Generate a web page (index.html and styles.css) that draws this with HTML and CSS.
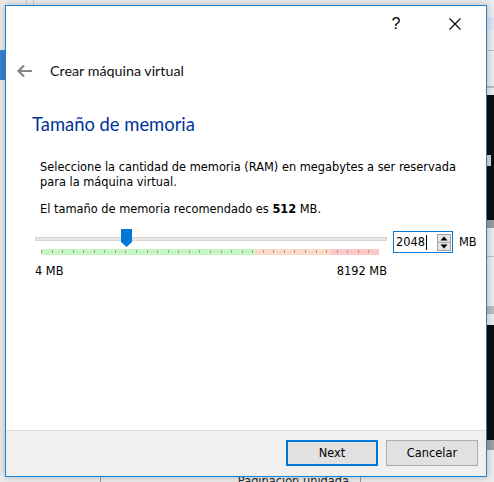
FILE: index.html
```html
<!DOCTYPE html>
<html lang="es">
<head>
    <meta charset="UTF-8">
    <meta name="viewport" content="width=device-width, initial-scale=1.0">
    <title>Crear máquina virtual</title>
    <link rel="stylesheet" href="styles.css">
</head>
<body>
    <div class="dialog">
        <div class="titlebar">
            <span class="cap-btn cap-help">?</span>
            <span class="cap-btn cap-close">
                <svg width="12" height="12" viewBox="0 0 12 12"><path d="M0.5 0.5L11.5 11.5M11.5 0.5L0.5 11.5" stroke="#000" stroke-width="1.1" fill="none"/></svg>
            </span>
        </div>

        <div class="wizard">
            <div class="wizard-header">
                <svg class="back" width="16" height="14" viewBox="0 0 16 14"><path d="M16 7H2.5M8 1.5L2.5 7L8 12.5" fill="none" stroke="#858585" stroke-width="2.2"/></svg>
                <span class="wizard-title">Crear máquina virtual</span>
            </div>

            <h1 class="page-title">Tamaño de memoria</h1>

            <p class="text first">Seleccione la cantidad de memoria (RAM) en megabytes a ser reservada para la máquina virtual.</p>
            <p class="text">El tamaño de memoria recomendado es <b>512</b> MB.</p>

            <div class="memory-row">
                <div class="slider">
                    <div class="groove">
                        <div class="track"></div>
                        <svg class="handle" width="11" height="18" viewBox="0 0 11 18"><path d="M0 0H11V13L5.5 18L0 13Z" fill="#0078d7"/></svg>
                    </div>
                    <div class="ticks"></div>
                    <div class="scale">
                        <span>4 MB</span>
                        <span>8192 MB</span>
                    </div>
                </div>

                <div class="spinbox">
                    <span class="value">2048</span>
                    <span class="caret"></span>
                    <svg class="spin" width="14" height="17" viewBox="0 0 14 17">
                        <rect x="0.5" y="0.5" width="13" height="8" fill="#e5e5e5" stroke="#a3a3a3"/>
                        <rect x="0.5" y="8.5" width="13" height="8" fill="#e5e5e5" stroke="#a3a3a3"/>
                        <path d="M3.5 6.5L7 2.5L10.5 6.5Z" fill="#000"/>
                        <path d="M3.5 10.5L7 14.5L10.5 10.5Z" fill="#000"/>
                    </svg>
                </div>
                <span class="unit">MB</span>
            </div>
        </div>

        <div class="footer">
            <button class="btn default">Next</button>
            <button class="btn">Cancelar</button>
        </div>
    </div>

    <div class="behind">Paginación unidada</div>
</body>
</html>
```

FILE: styles.css
```css
body {
    margin: 0;
    width: 494px;
    height: 482px;
    overflow: hidden;
    font-family: "DejaVu Sans", sans-serif;
    font-size: 11.4px;
    color: #000;
    background:
        linear-gradient(#3b84d6, #3b84d6) 0 50px / 5px 30px no-repeat,
        linear-gradient(#c9c9c9, #c9c9c9) 26px 0 / 1px 5px no-repeat,
        linear-gradient(#c9c9c9, #c9c9c9) 33px 0 / 1px 5px no-repeat,
        linear-gradient(#dde7f1, #dde7f1) 487px 17px / 7px 13px no-repeat,
        linear-gradient(#bdbdbd, #bdbdbd) 487px 50px / 7px 1px no-repeat,
        linear-gradient(#bdbdbd, #bdbdbd) 487px 86px / 7px 2px no-repeat,
        linear-gradient(#d9d9d9, #d9d9d9) 487px 155px / 4px 11px no-repeat,
        linear-gradient(#0d0d0d, #0d0d0d) 487px 95px / 7px 125px no-repeat,
        linear-gradient(#9c9c9c, #9c9c9c) 487px 220px / 7px 8px no-repeat,
        linear-gradient(#bdbdbd, #bdbdbd) 487px 256px / 7px 1px no-repeat,
        linear-gradient(#bdbdbd, #bdbdbd) 487px 306px / 7px 8px no-repeat,
        linear-gradient(#0d0d0d, #0d0d0d) 487px 325px / 7px 115px no-repeat,
        linear-gradient(#a0a0a0, #a0a0a0) 487px 440px / 7px 10px no-repeat,
        #ededed;
}

.dialog {
    margin: 5px 0 0 5px;
    width: 482px;
    height: 472px;
    box-sizing: border-box;
    border: 1px solid #1883d7;
    background-color: #fff;
    display: flex;
    flex-direction: column;
    box-shadow: 0 0 8px rgba(0, 0, 0, 0.25);
    position: relative;
}

.titlebar {
    height: 36px;
    display: flex;
    justify-content: flex-end;
    align-items: center;
    gap: 13px;
    padding-right: 8px;
}
.cap-btn {
    width: 46px;
    height: 30px;
    display: flex;
    justify-content: center;
    align-items: center;
}
.cap-help {
    font-family: "Liberation Sans", sans-serif;
    font-size: 16px;
}

.wizard {
    flex: 1;
}
.wizard-header {
    margin-top: 19px;
    height: 20px;
    padding-left: 10px;
    display: flex;
    align-items: center;
    gap: 18px;
}
.wizard-title {
    font-family: Lato, sans-serif;
    font-size: 14.3px;
    line-height: 20px;
    color: #111;
}

.page-title {
    margin: 31px 0 0 26px;
    font-family: Lato, sans-serif;
    font-size: 18.4px;
    font-weight: normal;
    line-height: 24px;
    color: #003399;
}

.text {
    margin: 12px 0 0 34px;
    width: 425px;
    line-height: 15px;
}
.text.first {
    margin-top: 24px;
}

.memory-row {
    margin: 12px 0 0 29px;
    display: flex;
    align-items: flex-start;
}
.slider {
    width: 352px;
}
.groove {
    position: relative;
    height: 18px;
}
.track {
    position: relative;
    top: 8px;
    height: 4px;
    box-sizing: border-box;
    border: 1px solid #d6d6d6;
    background-color: #e7e7e7;
}
.handle {
    position: absolute;
    left: 86px;
    top: 0;
}
.ticks {
    margin: 2px 8px 0 6px;
    height: 6px;
    background:
        repeating-linear-gradient(to right, #a39f9a 0 1px, transparent 1px 10.56px) 0 1px / 100% 3px no-repeat,
        linear-gradient(to right, #c6f5c4 0 214px, #fcd8c6 214px 290px, #ffc8c8 290px);
}
.scale {
    margin-top: 9px;
    line-height: 15px;
    display: flex;
    justify-content: space-between;
}

.spinbox {
    margin: 2px 0 0 6px;
    width: 60px;
    height: 22px;
    box-sizing: border-box;
    border: 1px solid #0078d7;
    display: flex;
    align-items: center;
    padding: 0 1px 0 2px;
}
.caret {
    width: 1px;
    height: 15px;
    margin-left: 1px;
    background-color: #000;
}
.spin {
    margin-left: auto;
}
.unit {
    margin: 2px 0 0 6px;
    line-height: 22px;
}

.footer {
    border-top: 1px solid #dfdfdf;
    background-color: #f0f0f0;
    padding: 9px 8px 10px;
    display: flex;
    justify-content: flex-end;
    gap: 8px;
}
.btn {
    width: 92px;
    height: 26px;
    box-sizing: border-box;
    border: 1px solid #adadad;
    background-color: #e1e1e1;
    font-family: "DejaVu Sans", sans-serif;
    font-size: 11.4px;
    color: #000;
    padding: 0;
}
.btn.default {
    border: 2px solid #0078d7;
}

.behind {
    margin-left: 100px;
    width: 261px;
    height: 12px;
    box-sizing: border-box;
    border: 1px solid #9a9a9a;
    border-top: none;
    text-align: right;
    padding-right: 11px;
    line-height: 9px;
    color: #222;
}
```
